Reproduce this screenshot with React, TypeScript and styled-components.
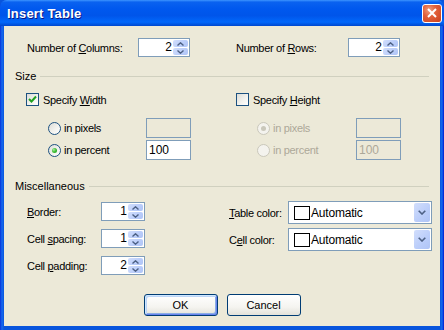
import styled, { createGlobalStyle } from 'styled-components'

const GlobalStyle = createGlobalStyle`
  html, body { margin: 0; padding: 0; background: #0855DD; }
  body { font-family: "Liberation Sans", Arial, sans-serif; font-size: 11px; color: #000; }
  * { box-sizing: border-box; }
`

const Window = styled.div`
  width: 444px;
  height: 330px;
  display: flex;
  flex-direction: column;
  background: linear-gradient(to right, #0831D9 0, #166AEE 2px, #0855DD 4px, #0855DD 440px, #166AEE 442px, #0019CF 444px);
  border-radius: 7px 7px 0 0;
  overflow: hidden;
`

const TitleBar = styled.div`
  height: 26px;
  flex: none;
  display: flex;
  align-items: center;
  justify-content: space-between;
  padding: 0 2px 0 7px;
  background: linear-gradient(to bottom, #3D95FF 0%, #0A62F0 8%, #0058EE 35%, #0055EA 60%, #0268FA 85%, #0047CE 100%);
  color: #fff;
`

const Title = styled.span`
  font-weight: bold;
  font-size: 13px;
  letter-spacing: 0.2px;
  text-shadow: 1px 1px 0 #0A1883;
`

const CloseButton = styled.div`
  width: 20px;
  height: 19px;
  border: 1px solid #fff;
  border-radius: 3px;
  background: radial-gradient(circle at 35% 30%, #F0A080 0%, #E2603A 40%, #C8401E 100%);
  display: flex;
  align-items: center;
  justify-content: center;
`

const Client = styled.div`
  flex: 1;
  margin: 0 4px 4px 4px;
  background: #ECE9D8;
  display: flex;
  flex-direction: column;
`

const TopRow = styled.div`
  display: flex;
  margin-top: 12px;
  padding-left: 23px;
  height: 19px;
`

const Field = styled.div<{ $w: number }>`
  display: flex;
  align-items: center;
  width: ${p => p.$w}px;
`

const Label = styled.span<{ $w?: number; $disabled?: boolean }>`
  display: inline-block;
  ${p => (p.$w ? `width: ${p.$w}px;` : '')}
  letter-spacing: -0.3px;
  white-space: nowrap;
  color: ${p => (p.$disabled ? '#ACA899' : '#000')};
`

const SectionHeader = styled.div<{ $top: number }>`
  display: flex;
  align-items: center;
  height: 14px;
  margin: ${p => p.$top}px 11px 0 11px;
  &::after {
    content: '';
    flex: 1;
    height: 1px;
    margin-left: 4px;
    background: #D0D0BF;
  }
`

const SizeGrid = styled.div`
  display: grid;
  grid-template-columns: 210px 1fr;
  padding-left: 22px;
  margin-top: 9px;
`

const SizeColumn = styled.div`
  display: flex;
  flex-direction: column;
`

const CheckRow = styled.label`
  display: flex;
  align-items: center;
  gap: 4px;
  height: 15px;
`

const CheckBox = styled.span`
  width: 13px;
  height: 13px;
  border: 1px solid #1C5180;
  background: linear-gradient(135deg, #DCDCD7 0%, #F4F4F0 60%, #FFFFFF 100%);
  display: flex;
  align-items: center;
  justify-content: center;
`

const RadioRow = styled.div<{ $indent: number; $top: number }>`
  display: flex;
  align-items: center;
  height: 20px;
  margin-top: ${p => p.$top}px;
  padding-left: ${p => p.$indent}px;
`

const RadioLabel = styled.span<{ $w: number }>`
  display: flex;
  align-items: center;
  gap: 3px;
  width: ${p => p.$w}px;
`

const Radio = styled.span<{ $checked?: boolean; $disabled?: boolean }>`
  width: 13px;
  height: 13px;
  border-radius: 50%;
  border: 1px solid ${p => (p.$disabled ? '#CAC8BB' : '#1C5180')};
  background: ${p =>
    p.$disabled ? '#F4F3EE' : 'linear-gradient(135deg, #DCDCD7 0%, #F4F4F0 60%, #FFFFFF 100%)'};
  display: flex;
  align-items: center;
  justify-content: center;
  &::after {
    content: '';
    display: ${p => (p.$checked ? 'block' : 'none')};
    width: 5px;
    height: 5px;
    border-radius: 50%;
    background: ${p =>
      p.$disabled ? '#CAC8BB' : 'radial-gradient(circle at 35% 35%, #A8EFA0 0%, #3DBB33 50%, #21A121 100%)'};
  }
`

const TextBox = styled.div<{ $disabled?: boolean }>`
  width: 45px;
  height: 20px;
  border: 1px solid #7F9DB9;
  background: ${p => (p.$disabled ? '#ECE9D8' : '#fff')};
  color: ${p => (p.$disabled ? '#ACA899' : '#000')};
  font-size: 12px;
  line-height: 18px;
  padding-left: 2px;
`

const MiscRow = styled.div`
  display: flex;
  margin-top: 8px;
`

const MiscLeft = styled.div`
  width: 225px;
  padding: 1px 0 0 23px;
  display: flex;
  flex-direction: column;
  gap: 8px;
`

const MiscRight = styled.div`
  display: flex;
  flex-direction: column;
  gap: 4px;
`

const MiscField = styled.div`
  display: flex;
  align-items: center;
`

const SpinBox = styled.div<{ $w: number }>`
  display: flex;
  width: ${p => p.$w}px;
  height: 19px;
  border: 1px solid #7F9DB9;
  background: #fff;
  padding: 1px;
`

const SpinValue = styled.span`
  flex: 1;
  text-align: right;
  font-size: 12px;
  line-height: 15px;
  padding-right: 1px;
`

const SpinButtons = styled.div`
  width: 15px;
  display: flex;
  flex-direction: column;
  gap: 1px;
`

const SpinHalf = styled.div`
  flex: 1;
  border-radius: 2px;
  background: linear-gradient(135deg, #D2DEFC 0%, #BACDFA 60%, #AFC4F6 100%);
  display: flex;
  align-items: center;
  justify-content: center;
`

const Combo = styled.div`
  width: 144px;
  height: 23px;
  border: 1px solid #7F9DB9;
  background: #fff;
  display: flex;
  align-items: center;
  padding: 1px 1px 1px 5px;
`

const Swatch = styled.span`
  width: 16px;
  height: 14px;
  border: 1px solid #000;
  background: #fff;
  margin-right: 1px;
`

const ComboText = styled.span`
  flex: 1;
  font-size: 12px;
  letter-spacing: -0.2px;
`

const ComboButton = styled.div`
  width: 16px;
  height: 19px;
  border-radius: 2px;
  background: linear-gradient(135deg, #D2DEFC 0%, #BACDFA 60%, #AFC4F6 100%);
  display: flex;
  align-items: center;
  justify-content: center;
`

const ButtonRow = styled.div`
  display: flex;
  justify-content: center;
  gap: 9px;
  margin-top: 19px;
`

const Button = styled.button<{ $default?: boolean }>`
  width: 74px;
  height: 22px;
  border: 1px solid #003C74;
  border-radius: 3px;
  background: linear-gradient(to bottom, #FFFFFF 0%, #F5F4F0 60%, #E3E2DA 100%);
  font-family: "Liberation Sans", Arial, sans-serif;
  font-size: 11px;
  color: #000;
  padding: 0;
  box-shadow: ${p =>
    p.$default ? 'inset 1px 1px 0 #CEE7FF, inset -1px -1px 0 #6982EE, inset 2px 2px 0 #BCD4F6, inset -2px -2px 0 #89ADE4' : 'none'};
`

const Arrow = ({ up }: { up?: boolean }) => (
  <svg width="7" height="4" viewBox="0 0 7 4">
    <path d={up ? 'M0.5 3.5 L3.5 0.8 L6.5 3.5' : 'M0.5 0.5 L3.5 3.2 L6.5 0.5'} fill="none" stroke="#4D6185" strokeWidth="1.4" />
  </svg>
)

const Spinner = ({ value, width }: { value: string; width: number }) => (
  <SpinBox $w={width}>
    <SpinValue>{value}</SpinValue>
    <SpinButtons>
      <SpinHalf><Arrow up /></SpinHalf>
      <SpinHalf><Arrow /></SpinHalf>
    </SpinButtons>
  </SpinBox>
)

const ColorCombo = () => (
  <Combo>
    <Swatch />
    <ComboText>Automatic</ComboText>
    <ComboButton>
      <svg width="8" height="5" viewBox="0 0 8 5">
        <path d="M0.7 0.7 L4 4 L7.3 0.7" fill="none" stroke="#4D6185" strokeWidth="1.6" />
      </svg>
    </ComboButton>
  </Combo>
)

export default function App() {
  return (
    <>
      <GlobalStyle />
      <Window>
        <TitleBar>
          <Title>Insert Table</Title>
          <CloseButton>
            <svg width="10" height="10" viewBox="0 0 10 10">
              <path d="M1 1 L9 9 M9 1 L1 9" stroke="#fff" strokeWidth="2" />
            </svg>
          </CloseButton>
        </TitleBar>
        <Client>
          <TopRow>
            <Field $w={209}>
              <Label $w={111}>Number of <u>C</u>olumns:</Label>
              <Spinner value="2" width={52} />
            </Field>
            <Field $w={164}>
              <Label $w={112}>Number of <u>R</u>ows:</Label>
              <Spinner value="2" width={52} />
            </Field>
          </TopRow>

          <SectionHeader $top={12}>Size</SectionHeader>
          <SizeGrid>
            <SizeColumn>
              <CheckRow>
                <CheckBox>
                  <svg width="9" height="9" viewBox="0 0 9 9">
                    <path d="M1 4 L3.5 6.5 L8 1.5" fill="none" stroke="#21A121" strokeWidth="2" />
                  </svg>
                </CheckBox>
                <Label>Specify <u>W</u>idth</Label>
              </CheckRow>
              <RadioRow $indent={22} $top={11}>
                <RadioLabel $w={98}>
                  <Radio />
                  <Label>in pixels</Label>
                </RadioLabel>
                <TextBox $disabled />
              </RadioRow>
              <RadioRow $indent={22} $top={2}>
                <RadioLabel $w={98}>
                  <Radio $checked />
                  <Label>in percent</Label>
                </RadioLabel>
                <TextBox>100</TextBox>
              </RadioRow>
            </SizeColumn>
            <SizeColumn>
              <CheckRow>
                <CheckBox />
                <Label>Specify <u>H</u>eight</Label>
              </CheckRow>
              <RadioRow $indent={21} $top={11}>
                <RadioLabel $w={99}>
                  <Radio $checked $disabled />
                  <Label $disabled>in pixels</Label>
                </RadioLabel>
                <TextBox $disabled />
              </RadioRow>
              <RadioRow $indent={21} $top={2}>
                <RadioLabel $w={99}>
                  <Radio $disabled />
                  <Label $disabled>in percent</Label>
                </RadioLabel>
                <TextBox $disabled>100</TextBox>
              </RadioRow>
            </SizeColumn>
          </SizeGrid>

          <SectionHeader $top={19}>Miscellaneous</SectionHeader>
          <MiscRow>
            <MiscLeft>
              <MiscField>
                <Label $w={74}><u>B</u>order:</Label>
                <Spinner value="1" width={44} />
              </MiscField>
              <MiscField>
                <Label $w={74}>Cell <u>s</u>pacing:</Label>
                <Spinner value="1" width={44} />
              </MiscField>
              <MiscField>
                <Label $w={74}>Cell <u>p</u>adding:</Label>
                <Spinner value="2" width={44} />
              </MiscField>
            </MiscLeft>
            <MiscRight>
              <MiscField>
                <Label $w={59}><u>T</u>able color:</Label>
                <ColorCombo />
              </MiscField>
              <MiscField>
                <Label $w={59}>C<u>e</u>ll color:</Label>
                <ColorCombo />
              </MiscField>
            </MiscRight>
          </MiscRow>

          <ButtonRow>
            <Button $default>OK</Button>
            <Button>Cancel</Button>
          </ButtonRow>
        </Client>
      </Window>
    </>
  )
}
